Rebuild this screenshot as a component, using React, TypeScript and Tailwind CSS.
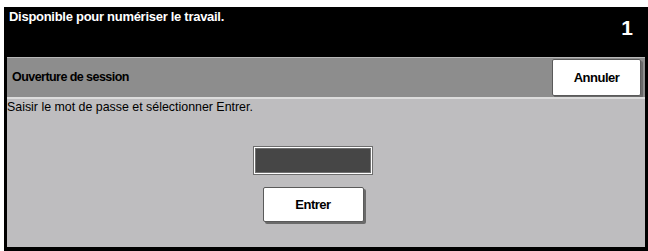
export default function App() {
  const narrow = "font-['Liberation_Sans_Narrow','Arial_Narrow','Liberation_Sans',sans-serif]";
  return (
    <div className="h-[251px] w-[648px] bg-white pl-[4px] pt-[7px]">
      <div className={`flex h-[244px] w-[644px] flex-col bg-black ${narrow}`}>
        <div className="flex h-[50px] justify-between pl-[5px] pr-[15px] text-white">
          <div className="pt-[2px] text-[13px] font-bold leading-[15px] tracking-[-0.28px]">Disponible pour numériser le travail.</div>
          <div className="pt-[9px] text-[21px] font-bold leading-[24px]">1</div>
        </div>
        <div className="flex flex-1 flex-col px-[3px] pb-[4px]">
          <div className="flex h-[40px] items-center justify-between border-t border-[#b8b8b8] bg-[#8d8d8d] pl-[5px] pr-[4px]">
            <div className="text-[12.5px] font-bold leading-[15px] tracking-[-0.55px] text-black">Ouverture de session</div>
            <button className="flex h-[37px] w-[89px] items-center justify-center rounded-[2px] border border-[#5a5a5a] bg-white text-[13px] font-bold tracking-[-0.5px] text-black shadow-[2px_2px_0_#6a6a6a]">
              Annuler
            </button>
          </div>
          <div className="flex flex-1 flex-col border-t-2 border-[#dcdcdc] bg-[#bebdbf]">
            <div className="pt-[1px] text-[12.4px] leading-[14px] text-black">Saisir le mot de passe et sélectionner Entrer.</div>
            <div className="flex flex-col items-center pr-[26px] pt-[32px]">
              <div className="h-[29px] w-[120px] border border-[#6e6e6e] bg-white p-[1px]">
                <div className="h-full w-full border border-[#707070] bg-[#464646]" />
              </div>
              <button className="mt-[12px] flex h-[35px] w-[101px] items-center justify-center rounded-[2px] border border-[#5a5a5a] bg-white text-[13px] font-bold tracking-[-0.5px] text-black shadow-[2px_2px_0_#6a6a6a]">
                Entrer
              </button>
            </div>
          </div>
        </div>
      </div>
    </div>
  );
}
